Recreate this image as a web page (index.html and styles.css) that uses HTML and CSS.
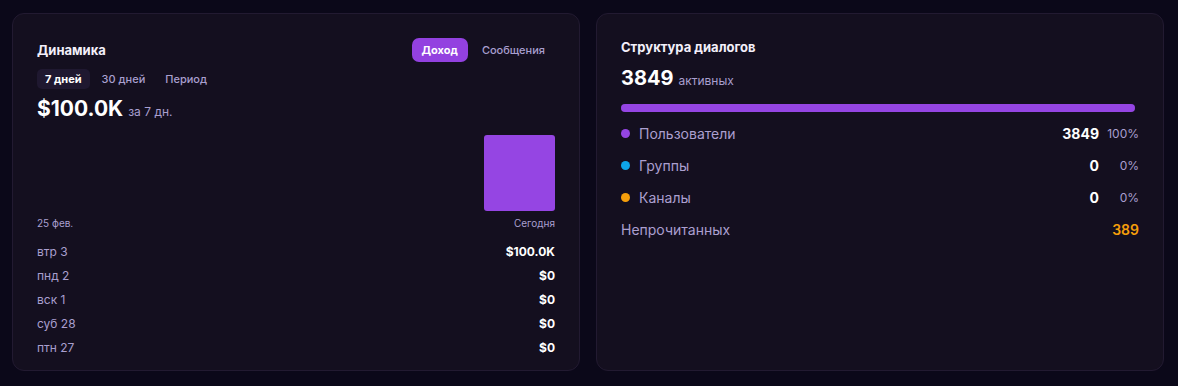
FILE: index.html
```html
<!DOCTYPE html>
<html lang="ru">
<head>
<meta charset="utf-8">
<link rel="stylesheet" href="styles.css">
</head>
<body>
<div class="page">
  <section class="card card-left">
    <div class="head">
      <h2 class="title">Динамика</h2>
      <div class="switch">
        <button class="sw sw-active">Доход</button>
        <button class="sw">Сообщения</button>
      </div>
    </div>
    <div class="tabs">
      <span class="tab tab-active">7 дней</span>
      <span class="tab">30 дней</span>
      <span class="tab">Период</span>
    </div>
    <div class="total"><span class="total-num">$100.0K</span><span class="total-sub">за 7 дн.</span></div>
    <div class="chart">
      <div class="col"></div>
      <div class="col"></div>
      <div class="col"></div>
      <div class="col"></div>
      <div class="col"></div>
      <div class="col"></div>
      <div class="col"><div class="bar" style="height:100%"></div></div>
    </div>
    <div class="axis"><span>25 фев.</span><span>Сегодня</span></div>
    <ul class="days">
      <li><span class="day">втр 3</span><span class="amt">$100.0K</span></li>
      <li><span class="day">пнд 2</span><span class="amt">$0</span></li>
      <li><span class="day">вск 1</span><span class="amt">$0</span></li>
      <li><span class="day">суб 28</span><span class="amt">$0</span></li>
      <li><span class="day">птн 27</span><span class="amt">$0</span></li>
    </ul>
  </section>
  <section class="card card-right">
    <h2 class="title title-r">Структура диалогов</h2>
    <div class="big"><span class="big-num">3849</span><span class="big-sub">активных</span></div>
    <div class="meter"><div class="meter-fill" style="width:100%"></div></div>
    <ul class="legend">
      <li><span class="dot dot-purple"></span><span class="lname">Пользователи</span><span class="lval">3849</span><span class="lpct">100%</span></li>
      <li><span class="dot dot-blue"></span><span class="lname">Группы</span><span class="lval">0</span><span class="lpct">0%</span></li>
      <li><span class="dot dot-orange"></span><span class="lname">Каналы</span><span class="lval">0</span><span class="lpct">0%</span></li>
      <li class="unread"><span class="lname">Непрочитанных</span><span class="uval">389</span></li>
    </ul>
  </section>
</div>
</body>
</html>
```
FILE: styles.css
```css
* { box-sizing: border-box; }
html, body { margin: 0; padding: 0; }
body {
  background: #0b0819;
  font-family: Inter, "Noto Sans", sans-serif;
  color: #f2eef9;
}
.page {
  display: grid;
  grid-template-columns: 568px 568px;
  gap: 16px;
  padding: 13px 14px 16px 12px;
}
.card {
  background: #140f1f;
  border: 1px solid #221a31;
  border-radius: 12px;
}
.card-left { padding: 24px 24px 10px; }
.card-right { padding: 24px; }
.title {
  margin: 0;
  font-size: 13px;
  font-weight: 700;
  line-height: 18px;
  color: #f3effa;
}
.head {
  display: flex;
  justify-content: space-between;
  align-items: center;
  height: 24px;
}
.switch { display: flex; gap: 4px; }
.sw {
  font-family: inherit;
  border: 0;
  background: transparent;
  color: #a99fcf;
  font-size: 11px;
  font-weight: 500;
  height: 24px;
  padding: 0 10px;
  border-radius: 7px;
}
.sw-active {
  background: #9341e0;
  color: #fff;
  font-weight: 700;
}
.tabs {
  display: flex;
  gap: 4px;
  margin-top: 7px;
  height: 20px;
}
.tab {
  font-size: 11px;
  line-height: 20px;
  padding: 0 8px;
  border-radius: 5px;
  color: #a99fcf;
  font-weight: 500;
}
.tab-active {
  background: #1f1830;
  color: #fff;
  font-weight: 700;
}
.total {
  display: flex;
  align-items: baseline;
  gap: 5px;
  height: 28px;
  margin-top: 6px;
}
.total-num { font-size: 21px; line-height: 28px; font-weight: 700; color: #fff; }
.total-sub { font-size: 12px; line-height: 16px; color: #a99fcf; }
.chart {
  margin-top: 12px;
  height: 76px;
  display: flex;
  gap: 4px;
  align-items: flex-end;
}
.col { flex: 1; height: 100%; display: flex; align-items: flex-end; }
.bar { width: 100%; background: #9545e3; border-radius: 3px; }
.axis {
  margin-top: 5px;
  display: flex;
  justify-content: space-between;
  font-size: 10px;
  line-height: 14px;
  height: 14px;
  color: #a99fcf;
}
.days { list-style: none; margin: 10px 0 0; padding: 0; }
.days li {
  display: flex;
  justify-content: space-between;
  line-height: 24px;
  height: 24px;
  font-size: 12px;
}
.day { color: #a99fcf; }
.amt { font-weight: 700; color: #fff; }
.big {
  display: flex;
  align-items: baseline;
  gap: 5px;
  height: 28px;
  margin-top: 8px;
}
.big-num { font-size: 20px; line-height: 28px; font-weight: 700; color: #fff; }
.big-sub { font-size: 12px; line-height: 16px; color: #a99fcf; }
.meter {
  margin-top: 12px;
  margin-right: 4px;
  height: 8px;
  border-radius: 4px;
  background: #2a2140;
}
.meter-fill { height: 100%; border-radius: 4px; background: #9545e3; }
.legend { list-style: none; margin: 5px 0 0; padding: 0; }
.legend li {
  display: flex;
  align-items: center;
  height: 32px;
}
.dot { width: 9px; height: 9px; border-radius: 50%; margin-right: 9px; }
.dot-purple { background: #9545e3; }
.dot-blue { background: #0ea5e9; }
.dot-orange { background: #f59e0b; }
.lname { flex: 1; font-size: 14px; color: #ab9fcf; }
.lval { font-size: 14px; font-weight: 700; color: #fff; }
.lpct { width: 40px; text-align: right; font-size: 12px; color: #a99fcf; }
.uval { font-size: 14px; font-weight: 600; color: #f59e0b; }
```
